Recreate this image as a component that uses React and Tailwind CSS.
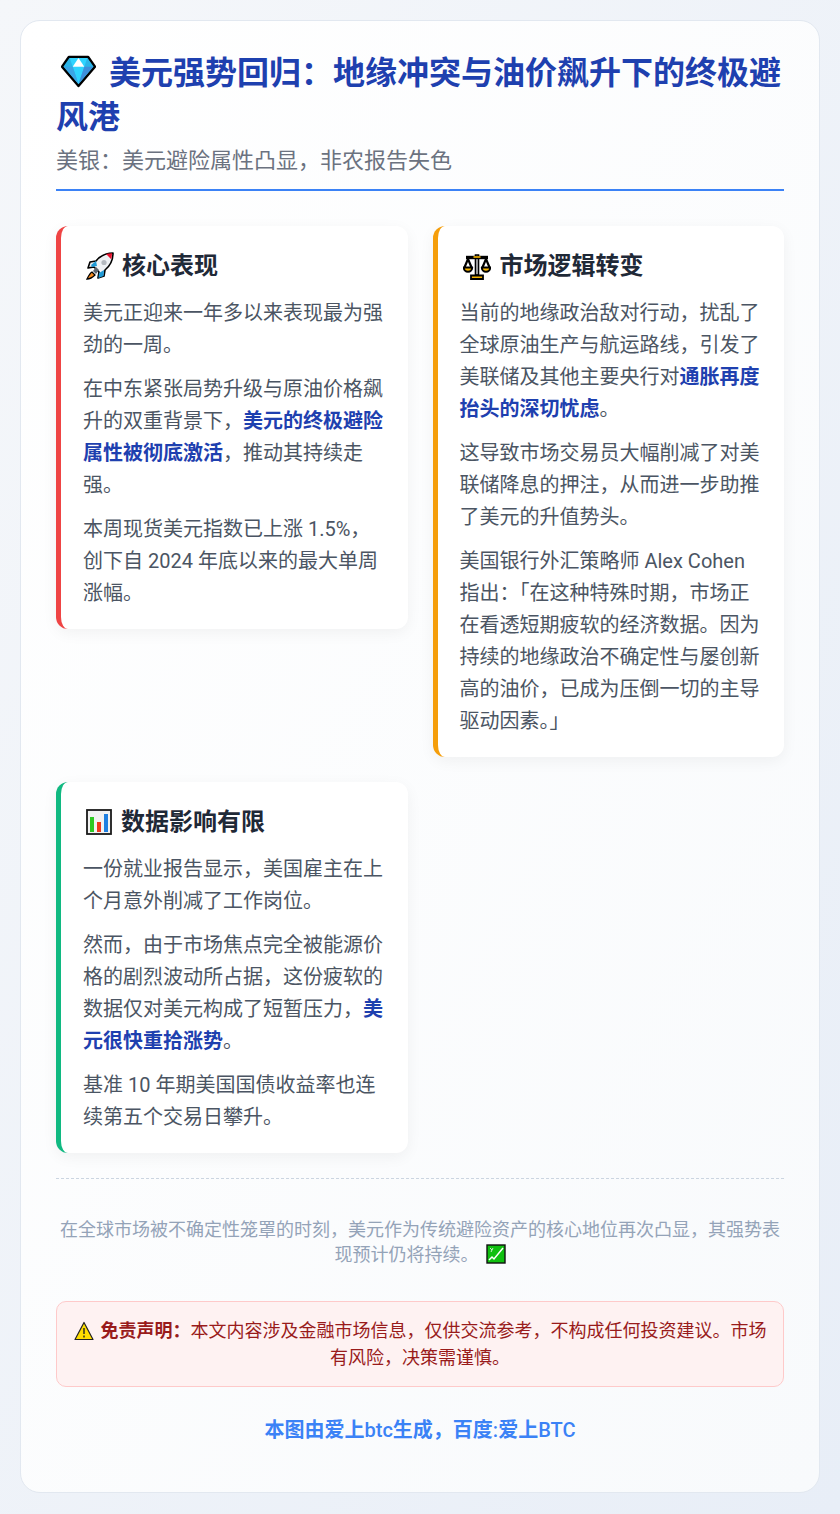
import React from 'react';

const cjk = { fontFamily: 'Roboto, "Noto Sans CJK SC", sans-serif' };

// full-width punctuation for the Chinese copy
const zh = (s) => s.replace(/,/g, '\uFF0C').replace(/:/g, '\uFF1A');

function Gem() {
  return (
    <svg viewBox="0 0 36 34" className="inline-block w-[35px] h-[33px] align-[-4px] ml-[5px] mr-[13px]">
      <path d="M8 2h20l7 10-17 20L1 12z" fill="#2bb5e8" stroke="#000" strokeWidth="2.4" strokeLinejoin="round" />
      <path d="M12 12h12l-6 18z" fill="#2fd4ff" />
      <path d="M9 3h18l-3 9H12z" fill="#2fd4ff" />
      <path d="M18 3l6 9H12z" fill="#fff" />
      <path d="M24 12h9L18 30z" fill="#3d8fdc" />
      <path d="M12 12H3l15 18z" fill="#3aa5e6" />
    </svg>
  );
}

function Rocket() {
  return (
    <svg viewBox="0 0 28 28" className="w-[28px] h-[28px] shrink-0 ml-[3px]">
      <path d="M10 9c4-5 10-8 17-8 0 7-3 13-8 17l-1 6-6 2 1-6-5-5-6 1 2-6z" fill="#eef1f4" stroke="#000" strokeWidth="1.6" strokeLinejoin="round" />
      <path d="M20 2c2-.5 4-.8 6-.8 0 2-.3 4-.8 6z" fill="#e8112d" />
      <circle cx="18" cy="10.5" r="2.6" fill="#b4b9bf" />
      <path d="M5 13l5-4 1 5-5 1zM13 21l5-3-.5 6-5 2z" fill="#1e9ad6" />
      <path d="M10 15l3 3-3 4-3-3z" fill="#5d6670" />
      <path d="M6 20c-2 1-4 5-5 7 3 0 6-2 8-4z" fill="#f78c1e" stroke="#000" strokeWidth="1.3" />
    </svg>
  );
}

function Scales() {
  return (
    <svg viewBox="0 0 28 28" className="w-[28px] h-[28px] shrink-0 ml-[3px] mr-[1px]">
      <path d="M12.5 3h3v20h-3z" fill="#d8d8d8" stroke="#000" strokeWidth="1.6" />
      <path d="M8 23.5h12v3.5H8z" fill="#f5b400" stroke="#000" strokeWidth="1.8" />
      <path d="M3 5.5h22" stroke="#000" strokeWidth="3.4" />
      <path d="M10.5 5h7" stroke="#f5b400" strokeWidth="1.6" />
      <path d="M1.2 16l3.8-9 3.8 9" fill="none" stroke="#000" strokeWidth="2.2" />
      <path d="M19.2 16l3.8-9 3.8 9" fill="none" stroke="#000" strokeWidth="2.2" />
      <path d="M.8 15.5h8.4a4.2 4.2 0 0 1-8.4 0zM18.8 15.5h8.4a4.2 4.2 0 0 1-8.4 0z" fill="#f5b400" stroke="#000" strokeWidth="2" strokeLinejoin="round" />
    </svg>
  );
}

function Bars() {
  return (
    <svg viewBox="0 0 26 26" className="w-[26px] h-[26px] shrink-0 ml-[3px] mr-[1px]">
      <rect x="1" y="1" width="24" height="24" fill="#f2f2f2" stroke="#1a1a1a" strokeWidth="1.8" />
      <rect x="4" y="8" width="4" height="15" fill="#2fc824" />
      <rect x="11" y="13" width="4" height="10" fill="#f0391e" />
      <rect x="18" y="5" width="4" height="18" fill="#1f7fe0" />
    </svg>
  );
}

function ChartUp() {
  return (
    <svg viewBox="0 0 20 20" className="inline-block w-[20px] h-[20px] align-[-3px] ml-[7px]">
      <rect x="1" y="1" width="18" height="18" fill="#10c010" stroke="#111" strokeWidth="1.4" />
      <path d="M3 16l3-3 2 2 9-11" fill="none" stroke="#fff" strokeWidth="1.5" />
      <path d="M4 4l2 2M7 4L5 8" stroke="#cfeccf" strokeWidth="1" />
    </svg>
  );
}

function Warn() {
  return (
    <svg viewBox="0 0 20 20" className="inline-block w-[20px] h-[20px] align-[-4px] mr-[7px]">
      <path d="M10 1.5L19 18.5H1z" fill="#ffdd00" stroke="#222" strokeWidth="1.2" strokeLinejoin="round" />
      <path d="M10 7v6M10 14.5v2" stroke="#222" strokeWidth="1.4" />
    </svg>
  );
}

function Card({ color, icon, title, children }) {
  return (
    <div className={`bg-white rounded-[12px] border-l-[5px] pt-[23px] pr-[24px] pb-[20px] pl-[22px] shadow-[0_4px_15px_rgba(0,0,0,0.05)] ${color}`}>
      <h2 className="flex items-center gap-[8px] text-[24px] leading-[34px] font-bold text-[#1f2937] mb-[14px]">
        {icon}
        {title}
      </h2>
      <div className="flex flex-col gap-[12px] text-[20px] leading-[32px] text-[#4b5563]">
        {children}
      </div>
    </div>
  );
}

function Hl({ children }) {
  return <strong className="font-bold text-[#1e40af]">{children}</strong>;
}

export default function App() {
  return (
    <div style={cjk} className="min-h-[1514px] bg-linear-to-br from-[#f5f7fa] to-[#e8eef7] p-[20px]">
      <div className="h-[1473px] rounded-[20px] border border-[#e2e8f0] bg-linear-to-br from-white to-[#f8fafc] px-[35px] pt-[30px]">
        <header className="border-b-2 border-[#3b82f6] pb-[13px] mb-[35px]">
          <h1 className="text-[32px] leading-[44px] font-bold text-[#1e40af]">
            <Gem />
            {zh('美元强势回归:地缘冲突与油价飙升下的终极避风港')}
          </h1>
          <p className="text-[22px] leading-[30px] text-[#6b7280] mt-[7px]">{zh('美银:美元避险属性凸显,非农报告失色')}</p>
        </header>

        <div className="grid grid-cols-2 gap-[25px] items-start">
          <Card color="border-[#ef4444]" icon={<Rocket />} title="核心表现">
            <p>美元正迎来一年多以来表现最为强劲的一周。</p>
            <p>{zh('在中东紧张局势升级与原油价格飙升的双重背景下,')}<Hl>美元的终极避险属性被彻底激活</Hl>{zh(',推动其持续走强。')}</p>
            <p>{zh('本周现货美元指数已上涨 1.5%,创下自 2024 年底以来的最大单周涨幅。')}</p>
          </Card>
          <Card color="border-[#f59e0b]" icon={<Scales />} title="市场逻辑转变">
            <p>{zh('当前的地缘政治敌对行动,扰乱了全球原油生产与航运路线,引发了美联储及其他主要央行对')}<Hl>通胀再度抬头的深切忧虑</Hl>。</p>
            <p>{zh('这导致市场交易员大幅削减了对美联储降息的押注,从而进一步助推了美元的升值势头。')}</p>
            <p>{zh('美国银行外汇策略师 Alex Cohen 指出:「在这种特殊时期,市场正在看透短期疲软的经济数据。因为持续的地缘政治不确定性与屡创新高的油价,已成为压倒一切的主导驱动因素。」')}</p>
          </Card>
          <Card color="border-[#10b981]" icon={<Bars />} title="数据影响有限">
            <p>{zh('一份就业报告显示,美国雇主在上个月意外削减了工作岗位。')}</p>
            <p>{zh('然而,由于市场焦点完全被能源价格的剧烈波动所占据,这份疲软的数据仅对美元构成了短暂压力,')}<Hl>美元很快重拾涨势</Hl>。</p>
            <p>基准 10 年期美国国债收益率也连续第五个交易日攀升。</p>
          </Card>
        </div>

        <div className="mt-[25px] border-t border-dashed border-[#cbd5e1] pt-[38px] text-center text-[18px] leading-[25px] text-[#94a3b8]">
          {zh('在全球市场被不确定性笼罩的时刻,美元作为传统避险资产的核心地位再次凸显,其强势表现预计仍将持续。')}
          <ChartUp />
        </div>

        <div className="mt-[34px] rounded-[10px] border border-[#fecaca] bg-[#fef2f2] px-[15px] py-[15px] text-center text-[18px] leading-[27px] text-[#991b1b]">
          <Warn />
          <strong className="font-bold">{zh('免责声明:')}</strong>
          {zh('本文内容涉及金融市场信息,仅供交流参考,不构成任何投资建议。市场有风险,决策需谨慎。')}
        </div>

        <p className="mt-[30px] text-center text-[20px] leading-[27px] font-bold text-[#3b82f6]">
          本图由爱上<span className="font-medium">btc</span>{'生成\uFF0C百度'}<span className="font-medium">:</span>爱上<span className="font-medium">BTC</span>
        </p>
      </div>
    </div>
  );
}
